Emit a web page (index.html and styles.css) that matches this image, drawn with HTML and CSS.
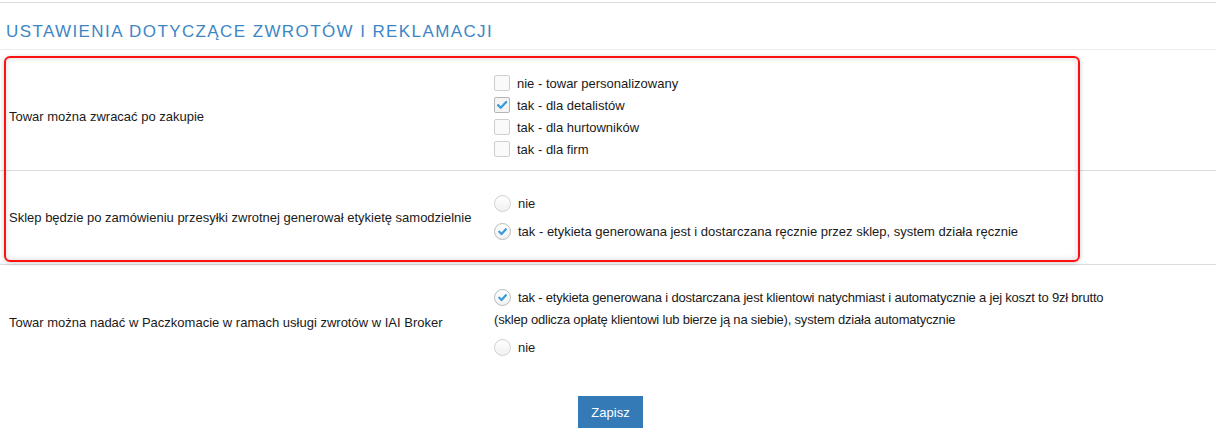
FILE: index.html
```html
<!DOCTYPE html>
<html lang="pl">
<head>
    <meta charset="UTF-8">
    <title>Ustawienia zwrotów</title>
    <link rel="stylesheet" href="styles.css">
</head>
<body>
    <div class="page">
        <h2 class="section-title">Ustawienia dotyczące zwrotów i reklamacji</h2>

        <div class="form-row row-returns">
            <div class="form-label">Towar można zwracać po zakupie</div>
            <div class="form-options">
                <label class="opt"><span class="box"></span>nie - towar personalizowany</label>
                <label class="opt"><span class="box checked"><svg viewBox="0 0 16 16"><path d="M3.5 8.2 L6.6 11.2 L12.8 4.6"/></svg></span>tak - dla detalistów</label>
                <label class="opt"><span class="box"></span>tak - dla hurtowników</label>
                <label class="opt"><span class="box"></span>tak - dla firm</label>
            </div>
        </div>

        <div class="form-row row-label">
            <div class="form-label">Sklep będzie po zamówieniu przesyłki zwrotnej generował etykietę samodzielnie</div>
            <div class="form-options">
                <label class="opt radio-opt"><span class="radio"></span>nie</label>
                <label class="opt radio-opt"><span class="radio checked"><svg viewBox="0 0 16 16"><path d="M4.6 8.3 L7 10.6 L11.6 5.6"/></svg></span>tak - etykieta generowana jest i dostarczana ręcznie przez sklep, system działa ręcznie</label>
            </div>
        </div>

        <div class="form-row row-broker">
            <div class="form-label">Towar można nadać w Paczkomacie w ramach usługi zwrotów w IAI Broker</div>
            <div class="form-options">
                <div class="opt-wrap"><span class="radio checked"><svg viewBox="0 0 16 16"><path d="M4.6 8.3 L7 10.6 L11.6 5.6"/></svg></span>tak - etykieta generowana i dostarczana jest klientowi natychmiast i automatycznie a jej koszt to 9zł brutto (sklep odlicza opłatę klientowi lub bierze ją na siebie), system działa automatycznie</div>
                <label class="opt radio-opt"><span class="radio"></span>nie</label>
            </div>
        </div>

        <div class="actions">
            <button class="btn-save" type="button">Zapisz</button>
        </div>

        <!-- zaznaczenie -->
        <div class="highlight"></div>
    </div>
</body>
</html>
```

FILE: styles.css
```css
*{
    margin: 0;
    padding: 0;
    box-sizing: border-box;
}
body{
    font-family: "Liberation Sans", Arial, sans-serif;
    font-size: 13px;
    color: #1a1a1a;
    background: #fff;
}

.page{
    position: relative;
    width: 1216px;
    margin-top: 2px;
    border-top: 1px solid #dcdcdc;
}

.section-title{
    font-weight: normal;
    font-size: 17px;
    line-height: 20px;
    letter-spacing: 1.4px;
    text-transform: uppercase;
    color: #3d86c6;
    padding: 19px 0 7px 6px;
    border-bottom: 1px solid #ececec;
    margin-bottom: 12px;
}

.form-row{
    display: grid;
    grid-template-columns: 485px 1fr;
    align-items: center;
    border-bottom: 1px solid #dcdcdc;
}
.row-returns{
    height: 109px;
}
.row-label{
    height: 94px;
}
.row-broker{
    height: 115px;
    border-bottom: none;
}

.form-label{
    padding-left: 9px;
}

.form-options{
    padding-left: 9px;
}

.opt{
    display: flex;
    align-items: center;
    height: 22px;
}
.radio-opt{
    height: 28px;
}
.row-broker .radio-opt{
    height: 22px;
    margin-top: 5px;
}

.opt-wrap{
    width: 625px;
    line-height: 22px;
    letter-spacing: -0.2px;
}
.opt-wrap .radio{
    display: inline-block;
    vertical-align: -4px;
}

.box{
    width: 16px;
    height: 16px;
    border: 1px solid #cfcfcf;
    border-radius: 2px;
    background: #fafafa;
    margin-right: 7px;
}
.box.checked{
    border-color: #b5b5b5;
    background: #f4f4f4;
}

.radio{
    width: 17px;
    height: 17px;
    border: 1px solid #cfcfcf;
    border-radius: 50%;
    background: linear-gradient(#fff, #f1f1f1);
    margin-right: 7px;
}
.radio.checked{
    border-color: #b9b9b9;
}

.box svg, .radio svg{
    display: block;
    width: 100%;
    height: 100%;
    fill: none;
    stroke: #3a9ad9;
    stroke-width: 2.6;
    stroke-linecap: round;
    stroke-linejoin: round;
}
.radio svg{
    stroke-width: 2.4;
}

.actions{
    text-align: center;
    padding-top: 16px;
    padding-left: 5px;
}
.btn-save{
    width: 65px;
    height: 32px;
    border: none;
    background: #337ab7;
    color: #fff;
    font-family: "Liberation Sans", Arial, sans-serif;
    font-size: 13px;
}

/* ramka zaznaczenia na zrzucie */
.highlight{
    position: absolute;
    left: 4px;
    top: 53px;
    width: 1076px;
    height: 206px;
    border: 2px solid #ff1010;
    border-radius: 6px;
    box-shadow: 0 1px 5px rgba(0, 0, 0, 0.2), inset 0 0 6px rgba(0, 0, 0, 0.15);
    pointer-events: none;
}
```
